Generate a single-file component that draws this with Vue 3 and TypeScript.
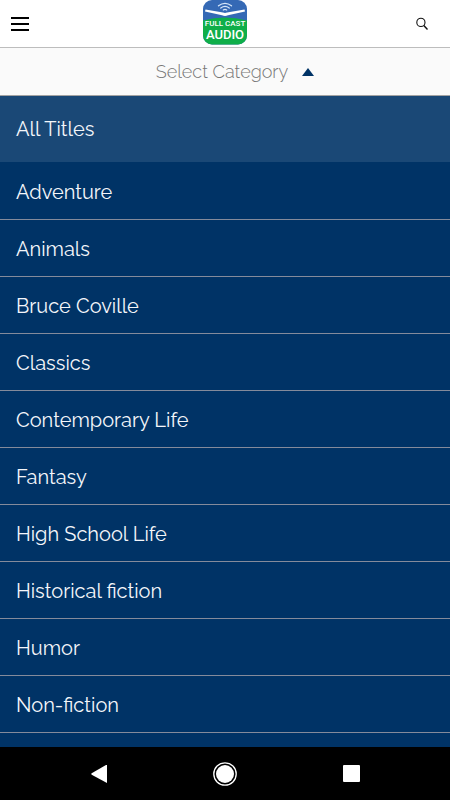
<script setup lang="ts">
import { ref } from 'vue'

const categories: string[] = [
  'Adventure',
  'Animals',
  'Bruce Coville',
  'Classics',
  'Contemporary Life',
  'Fantasy',
  'High School Life',
  'Historical fiction',
  'Humor',
  'Non-fiction',
]

const open = ref(true)
</script>

<template>
  <div class="screen">
    <header class="top-bar">
      <button class="icon-button menu" type="button" aria-label="Menu">
        <svg width="18" height="15" viewBox="0 0 18 15" aria-hidden="true">
          <path d="M0 2h18M0 8h18M0 14h18" stroke="#000" stroke-width="2" />
        </svg>
      </button>
      <a class="logo" href="#" aria-label="Full Cast Audio">
        <svg width="44" height="45" viewBox="0 0 44 45">
          <defs>
            <clipPath id="badge"><rect width="44" height="44.5" rx="9" /></clipPath>
          </defs>
          <g clip-path="url(#badge)">
            <rect width="44" height="45" fill="#3569b5" />
            <path d="M0 20.500Q11 17.500 22 17.500q11 0 22 3V45H0z" fill="#0fae49" />
          </g>
          <path
            d="M2.500 9.500 20 12.600q2 .8 4 0L41.500 9.500l.5 2L25 15.200q-3 1.500-6 0L2 11.500z"
            fill="#fff"
          />
          <g fill="none" stroke="#d5e5f8" stroke-width="1.300" stroke-linecap="round">
            <path d="M15.500 5.800q6.500-5 13 0" />
            <path d="M17.800 8q4.200-3.200 8.400 0" />
            <path d="M20.300 10q1.700-1.200 3.400 0" />
          </g>
          <text class="logo-small" x="22" y="26" text-anchor="middle">FULL CAST</text>
          <text class="logo-large" x="22" y="39" text-anchor="middle">AUDIO</text>
        </svg>
      </a>
      <button class="icon-button search" type="button" aria-label="Search">
        <svg width="12" height="13" viewBox="0 0 12 13" aria-hidden="true">
          <circle cx="4.900" cy="5.400" r="4.100" fill="none" stroke="#111" stroke-width="1.100" />
          <path d="m7.800 8.400 3.700 4" stroke="#111" stroke-width="1.400" />
        </svg>
      </button>
    </header>

    <button class="selector" type="button" :aria-expanded="open" @click="open = !open">
      <span>Select Category</span>
      <svg width="12" height="8" viewBox="0 0 12 8" aria-hidden="true">
        <path d="M6 0 12 8H0z" fill="#003366" />
      </svg>
    </button>

    <nav class="categories" aria-label="Categories">
      <template v-if="open">
        <a class="all" href="#">All Titles</a>
        <a v-for="name in categories" :key="name" class="row" href="#">{{ name }}</a>
      </template>
    </nav>

    <footer class="system-bar">
      <button class="system-button" type="button" aria-label="Back">
        <svg width="16" height="18" viewBox="0 0 16 18" aria-hidden="true">
          <path d="M16 0v18L.7 9.700q-.8-.7 0-1.400L15 0z" fill="#fff" />
        </svg>
      </button>
      <button class="system-button" type="button" aria-label="Home">
        <svg width="24" height="24" viewBox="0 0 24 24" aria-hidden="true">
          <circle cx="12" cy="12" r="11.200" fill="none" stroke="#fff" stroke-width="1.300" />
          <circle cx="12" cy="12" r="9" fill="#fff" />
        </svg>
      </button>
      <button class="system-button" type="button" aria-label="Recent apps">
        <svg width="17" height="17" viewBox="0 0 17 17" aria-hidden="true">
          <rect width="17" height="17" rx="1" fill="#fff" />
        </svg>
      </button>
    </footer>
  </div>
</template>

<style>
body {
  margin: 0;
}
</style>

<style scoped>
.screen {
  display: flex;
  flex-direction: column;
  height: 100vh;
  background: #003366;
  font-family: Raleway, Lato, sans-serif;
  font-size: 20px;
  line-height: 28px;
}

button {
  margin: 0;
  padding: 0;
  border: 0;
  background: none;
  font: inherit;
  cursor: pointer;
}

svg {
  display: block;
}

a {
  color: inherit;
  text-decoration: none;
}

.top-bar {
  display: grid;
  grid-template-columns: 1fr auto 1fr;
  align-items: center;
  box-sizing: border-box;
  height: 48px;
  border-bottom: 1px solid #bdbdbd;
  background: #fff;
}

.logo {
  align-self: start;
}

.icon-button {
  padding: 11px;
}

.menu {
  justify-self: start;
}

.search {
  justify-self: end;
  padding: 11px 22px;
}

.logo-small,
.logo-large {
  fill: #fff;
  font-family: Roboto, sans-serif;
  font-weight: 500;
}

.logo-small {
  font-size: 8px;
}

.logo-large {
  font-size: 13px;
}

.selector {
  display: flex;
  align-items: center;
  justify-content: center;
  gap: 14px;
  box-sizing: border-box;
  height: 48px;
  padding-left: 20px;
  border-bottom: 1px solid #a3a3a3;
  background: #fafafa;
  color: #777;
  font-size: 18px;
  font-weight: 300;
}

.categories {
  display: flex;
  flex: 1;
  flex-direction: column;
  min-height: 0;
  overflow: auto;
  color: #f4f6fa;
}

.all,
.row {
  flex: none;
  padding: 15px 16px 13px;
}

.all {
  margin-bottom: 1px;
  padding: 19px 16px;
  background: #1a4876;
}

.row {
  border-bottom: 1px solid #848b9b;
}

.system-bar {
  display: grid;
  flex: none;
  grid-template-columns: repeat(3, 1fr);
  place-items: center;
  height: 53px;
  padding: 0 8%;
  background: #000;
}
</style>
